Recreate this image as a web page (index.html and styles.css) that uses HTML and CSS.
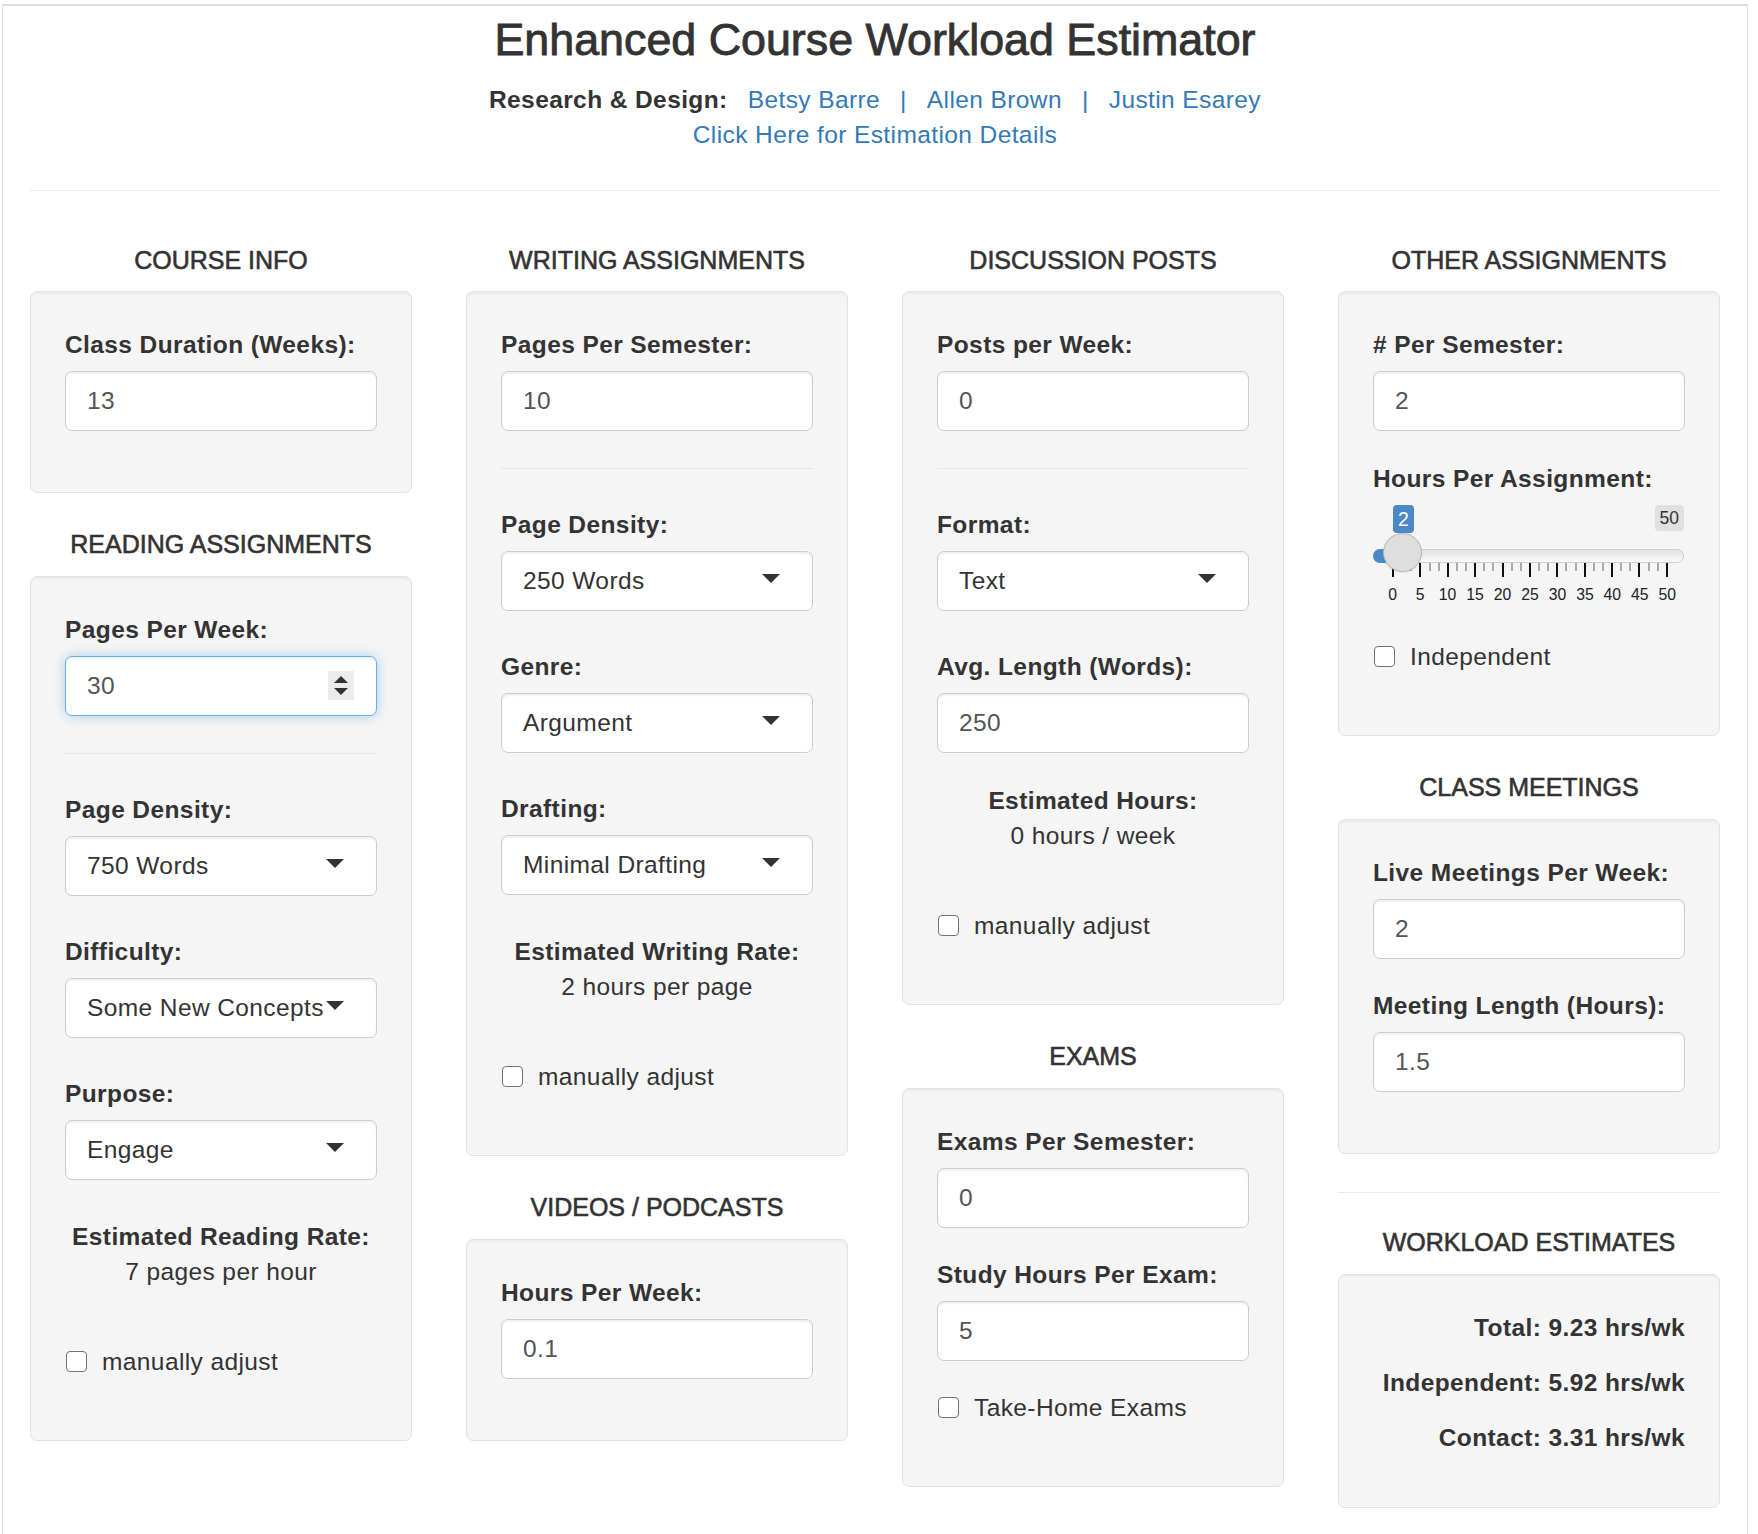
FILE: index.html
```html
<!DOCTYPE html>
<html lang="en">
<head>
<meta charset="utf-8">
<title>Enhanced Course Workload Estimator</title>
<link rel="stylesheet" href="styles.css">
</head>
<body>
<div class="page">
  <header class="header">
    <h1 class="title">Enhanced Course Workload Estimator</h1>
    <div class="credits">
      <span class="credits-label">Research &amp; Design:</span>
      <a class="link" href="#">Betsy Barre</a>
      <span class="sep">|</span>
      <a class="link" href="#">Allen Brown</a>
      <span class="sep">|</span>
      <a class="link" href="#">Justin Esarey</a>
    </div>
    <div class="details"><a class="link" href="#">Click Here for Estimation Details</a></div>
  </header>
  <hr class="rule">

  <div class="grid">
    <!-- Column 1 -->
    <div class="col">
      <section class="section">
        <h4 class="section-title">COURSE INFO</h4>
        <div class="well">
          <div class="group">
            <div class="label">Class Duration (Weeks):</div>
            <div class="input">13</div>
          </div>
        </div>
      </section>
      <section class="section">
        <h4 class="section-title">READING ASSIGNMENTS</h4>
        <div class="well">
          <div class="group">
            <div class="label">Pages Per Week:</div>
            <div class="input input-focus">30<span class="spinner"><span class="spin-up"></span><span class="spin-down"></span></span></div>
          </div>
          <hr class="well-rule">
          <div class="group group-select">
            <div class="label">Page Density:</div>
            <div class="select">750 Words<span class="caret"></span></div>
          </div>
          <div class="group group-select">
            <div class="label">Difficulty:</div>
            <div class="select">Some New Concepts<span class="caret"></span></div>
          </div>
          <div class="group group-select">
            <div class="label">Purpose:</div>
            <div class="select">Engage<span class="caret"></span></div>
          </div>
          <div class="estimate">
            <div class="estimate-title">Estimated Reading Rate:</div>
            <div>7 pages per hour</div>
          </div>
          <div class="check"><span class="box"></span>manually adjust</div>
        </div>
      </section>
    </div>

    <!-- Column 2 -->
    <div class="col">
      <section class="section">
        <h4 class="section-title">WRITING ASSIGNMENTS</h4>
        <div class="well">
          <div class="group">
            <div class="label">Pages Per Semester:</div>
            <div class="input">10</div>
          </div>
          <hr class="well-rule">
          <div class="group group-select">
            <div class="label">Page Density:</div>
            <div class="select">250 Words<span class="caret"></span></div>
          </div>
          <div class="group group-select">
            <div class="label">Genre:</div>
            <div class="select">Argument<span class="caret"></span></div>
          </div>
          <div class="group group-select">
            <div class="label">Drafting:</div>
            <div class="select">Minimal Drafting<span class="caret"></span></div>
          </div>
          <div class="estimate">
            <div class="estimate-title">Estimated Writing Rate:</div>
            <div>2 hours per page</div>
          </div>
          <div class="check"><span class="box"></span>manually adjust</div>
        </div>
      </section>
      <section class="section">
        <h4 class="section-title">VIDEOS / PODCASTS</h4>
        <div class="well">
          <div class="group">
            <div class="label">Hours Per Week:</div>
            <div class="input">0.1</div>
          </div>
        </div>
      </section>
    </div>

    <!-- Column 3 -->
    <div class="col">
      <section class="section">
        <h4 class="section-title">DISCUSSION POSTS</h4>
        <div class="well">
          <div class="group">
            <div class="label">Posts per Week:</div>
            <div class="input">0</div>
          </div>
          <hr class="well-rule">
          <div class="group group-select">
            <div class="label">Format:</div>
            <div class="select">Text<span class="caret"></span></div>
          </div>
          <div class="group">
            <div class="label">Avg. Length (Words):</div>
            <div class="input">250</div>
          </div>
          <div class="estimate">
            <div class="estimate-title">Estimated Hours:</div>
            <div>0 hours / week</div>
          </div>
          <div class="check"><span class="box"></span>manually adjust</div>
        </div>
      </section>
      <section class="section">
        <h4 class="section-title">EXAMS</h4>
        <div class="well">
          <div class="group">
            <div class="label">Exams Per Semester:</div>
            <div class="input">0</div>
          </div>
          <div class="group">
            <div class="label">Study Hours Per Exam:</div>
            <div class="input">5</div>
          </div>
          <div class="check"><span class="box"></span>Take-Home Exams</div>
        </div>
      </section>
    </div>

    <!-- Column 4 -->
    <div class="col">
      <section class="section">
        <h4 class="section-title">OTHER ASSIGNMENTS</h4>
        <div class="well">
          <div class="group">
            <div class="label"># Per Semester:</div>
            <div class="input">2</div>
          </div>
          <div class="group group-slider">
            <div class="label">Hours Per Assignment:</div>
            <div class="slider">
              <div class="slider-bubbles">
                <span class="bubble bubble-value">2</span>
                <span class="bubble bubble-max">50</span>
              </div>
              <div class="slider-track">
                <span class="slider-bar"></span>
                <span class="slider-handle"></span>
              </div>
              <div class="slider-ticks">
                <span class="tick tick-big"></span><span class="tick"></span><span class="tick"></span>
                <span class="tick tick-big"></span><span class="tick"></span><span class="tick"></span>
                <span class="tick tick-big"></span><span class="tick"></span><span class="tick"></span>
                <span class="tick tick-big"></span><span class="tick"></span><span class="tick"></span>
                <span class="tick tick-big"></span><span class="tick"></span><span class="tick"></span>
                <span class="tick tick-big"></span><span class="tick"></span><span class="tick"></span>
                <span class="tick tick-big"></span><span class="tick"></span><span class="tick"></span>
                <span class="tick tick-big"></span><span class="tick"></span><span class="tick"></span>
                <span class="tick tick-big"></span><span class="tick"></span><span class="tick"></span>
                <span class="tick tick-big"></span><span class="tick"></span><span class="tick"></span>
                <span class="tick tick-big"></span>
              </div>
              <div class="slider-labels">
                <span>0</span><span>5</span><span>10</span><span>15</span><span>20</span><span>25</span><span>30</span><span>35</span><span>40</span><span>45</span><span>50</span>
              </div>
            </div>
          </div>
          <div class="check"><span class="box"></span>Independent</div>
        </div>
      </section>
      <section class="section">
        <h4 class="section-title">CLASS MEETINGS</h4>
        <div class="well">
          <div class="group">
            <div class="label">Live Meetings Per Week:</div>
            <div class="input">2</div>
          </div>
          <div class="group">
            <div class="label">Meeting Length (Hours):</div>
            <div class="input">1.5</div>
          </div>
        </div>
      </section>
      <hr class="col-rule">
      <section class="section section-flush">
        <h4 class="section-title">WORKLOAD ESTIMATES</h4>
        <div class="well">
          <div class="total">Total: 9.23 hrs/wk</div>
          <div class="total">Independent: 5.92 hrs/wk</div>
          <div class="total">Contact: 3.31 hrs/wk</div>
        </div>
      </section>
    </div>
  </div>
</div>
</body>
</html>
```

FILE: styles.css
```css
* {
  box-sizing: border-box;
}

html,
body {
  margin: 0;
  padding: 0;
  background: #fff;
}

body {
  font-family: "Liberation Sans", Arial, Helvetica, sans-serif;
  font-size: 24.5px;
  line-height: 35px;
  letter-spacing: 0.4px;
  color: #333;
}

.page {
  margin: 4px 0 0 2px;
  width: 1746px;
  min-height: 1530px;
  border: 1px solid #dedede;
  border-top: 2px solid #dedede;
  border-bottom: 0;
}

/* ---------- header ---------- */
.header {
  text-align: center;
  padding-top: 9px;
}

.title {
  margin: 0;
  font-size: 44.8px;
  line-height: 49px;
  font-weight: 400;
  letter-spacing: 0;
  color: #333;
  -webkit-text-stroke: 0.9px #333;
}

.credits {
  display: flex;
  justify-content: center;
  gap: 20px;
  margin-top: 18px;
}

.credits-label {
  font-weight: 700;
}

.link,
.sep {
  color: #337ab7;
  text-decoration: none;
}

.rule {
  margin: 38px 27px 0;
  height: 0;
  border: 0;
  border-top: 1px solid #eaeaea;
}

/* ---------- grid ---------- */
.grid {
  display: grid;
  grid-template-columns: repeat(4, 436px);
  padding-top: 18px;
}

.col {
  padding: 0 27px;
}

.section-title {
  margin: 37px 0 18px;
  font-size: 25px;
  line-height: 28px;
  font-weight: 400;
  letter-spacing: 0;
  text-align: center;
  color: #333;
  -webkit-text-stroke: 0.6px #333;
}

.col > .section:first-child .section-title {
  margin-bottom: 17px;
}

.section-flush .section-title {
  margin-top: 0;
}

.col-rule {
  margin: 38px 0 35px;
  height: 0;
  border: 0;
  border-top: 1px solid #eaeaea;
}

.well {
  background: #f5f5f5;
  border: 1px solid #e3e3e3;
  border-radius: 7px;
  box-shadow: inset 0 2px 2px rgba(0, 0, 0, 0.04);
  padding: 33px 34px 34px;
}

/* ---------- form controls ---------- */
.group {
  margin-bottom: 27px;
}

.group-select {
  margin-bottom: 36px;
}

.label {
  padding-top: 2px;
  margin-bottom: 9px;
  font-weight: 700;
  white-space: nowrap;
}

.group-slider .label {
  padding-top: 3px;
}

.input {
  position: relative;
  height: 60px;
  padding: 0 21px;
  line-height: 58px;
  color: #555;
  background: #fff;
  border: 1px solid #ccc;
  border-radius: 7px;
  box-shadow: inset 0 2px 2px rgba(0, 0, 0, 0.06);
}

.input-focus {
  border-color: #66afe9;
  box-shadow: inset 0 2px 2px rgba(0, 0, 0, 0.06), 0 0 12px rgba(102, 175, 233, 0.55);
}

.spinner {
  position: absolute;
  right: 22px;
  top: 14px;
  width: 26px;
  height: 29px;
  background: #ececec;
}

.spin-up,
.spin-down {
  position: absolute;
  left: 6px;
  width: 0;
  height: 0;
  border-left: 7px solid transparent;
  border-right: 7px solid transparent;
}

.spin-up {
  top: 5px;
  border-bottom: 7px solid #333;
}

.spin-down {
  top: 17px;
  border-top: 7px solid #333;
}

.select {
  position: relative;
  height: 60px;
  padding: 0 21px;
  line-height: 58px;
  color: #333;
  white-space: nowrap;
  background: #fff;
  border: 1px solid #ccc;
  border-radius: 7px;
  box-shadow: inset 0 2px 2px rgba(0, 0, 0, 0.06);
}

.caret {
  position: absolute;
  right: 32px;
  top: 22px;
  width: 0;
  height: 0;
  border-left: 9px solid transparent;
  border-right: 9px solid transparent;
  border-top: 9px solid #333;
}

.well-rule {
  margin: 37px 0 36px;
  height: 0;
  border: 0;
  border-top: 1px solid #e6e6e6;
}

.estimate {
  padding-top: 3px;
  margin-bottom: 55px;
  text-align: center;
}

.estimate-title {
  font-weight: 700;
}

.check {
  margin-top: 29px;
  margin-bottom: 27px;
  white-space: nowrap;
}

.box {
  display: inline-block;
  width: 21px;
  height: 21px;
  margin: 0 15px 0 1px;
  vertical-align: -2px;
  background: #fff;
  border: 1.5px solid #727272;
  border-radius: 4px;
}

/* ---------- slider ---------- */
.slider {
  height: 105px;
  width: 312px;
  letter-spacing: 0;
}

.slider-bubbles {
  position: relative;
  height: 44px;
}

.bubble {
  position: absolute;
  top: 0;
  padding: 0 5px;
  border-radius: 4px;
  text-align: center;
}

.bubble-value {
  left: 20px;
  height: 28px;
  line-height: 28px;
  font-size: 19.5px;
  color: #fff;
  background: #4a89c8;
}

.bubble-max {
  right: 1px;
  height: 26px;
  line-height: 26px;
  font-size: 17.5px;
  color: #333;
  background: #e0e0e0;
}

.slider-track {
  position: relative;
  width: 311px;
  height: 14px;
  border: 1px solid #cfcfcf;
  border-radius: 8px;
  background: linear-gradient(to bottom, #e2e2e2, #fafafa);
}

.slider-bar {
  position: absolute;
  left: -1px;
  top: -1px;
  width: 32px;
  height: 14px;
  border-radius: 7px 0 0 7px;
  background: #4a89c8;
}

.slider-handle {
  position: absolute;
  left: 9px;
  top: -17px;
  width: 39px;
  height: 39px;
  border-radius: 50%;
  background: #dedede;
  border: 1px solid #b5b5b5;
  box-shadow: 0 1px 2px rgba(0, 0, 0, 0.08);
}

.slider-ticks {
  display: flex;
  justify-content: space-between;
  align-items: flex-start;
  width: 276px;
  height: 14px;
  margin-left: 19px;
}

.tick {
  width: 2px;
  height: 8px;
  background: #a8a8a8;
}

.tick-big {
  height: 14px;
  background: #111;
}

.slider-labels {
  display: flex;
  justify-content: space-between;
  width: 302px;
  margin: 9px 0 0 6px;
  font-size: 15.75px;
  line-height: 18px;
  color: #222;
}

.slider-labels span {
  width: 28px;
  text-align: center;
}

/* ---------- totals ---------- */
.total {
  padding-top: 2px;
  margin-bottom: 18px;
  font-weight: 700;
  text-align: right;
  white-space: nowrap;
}
```
